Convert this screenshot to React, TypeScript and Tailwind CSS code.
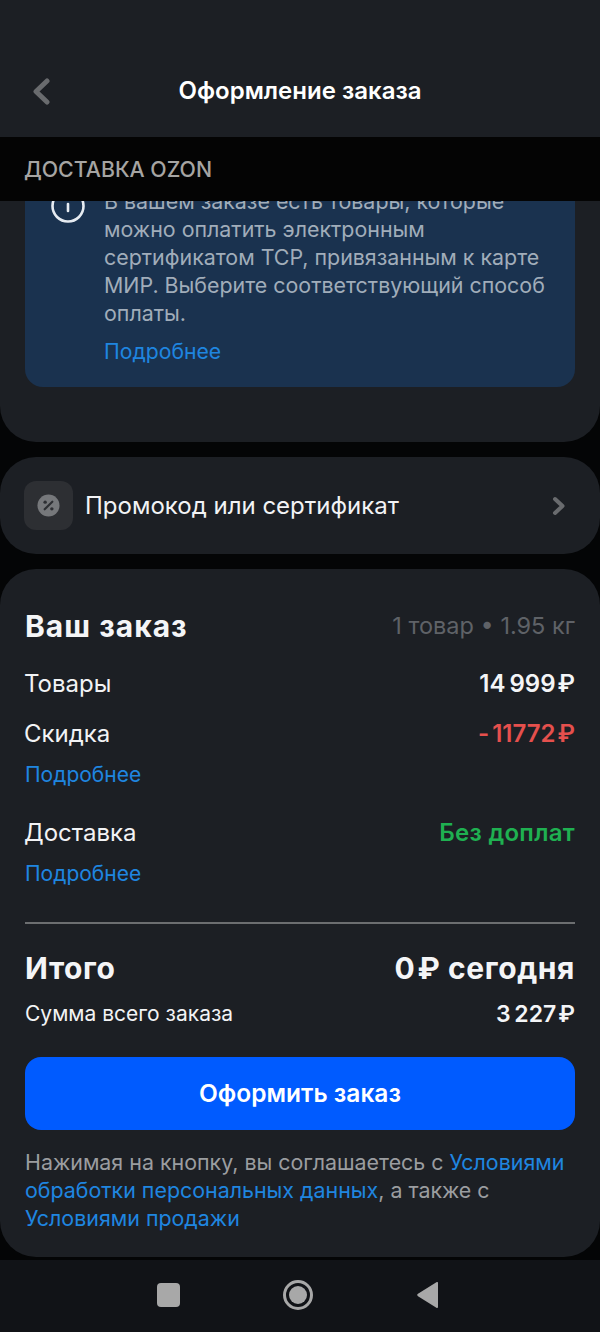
function Rub() {
    return <span className="ml-[2px]">₽</span>;
}

function Row({ label, value, valueClass }: { label: string; value: React.ReactNode; valueClass: string }) {
    return (
        <div className="flex items-center justify-between h-[30px]">
            <span className="text-[24px] text-[#f2f3f5] -ml-[1px]">{label}</span>
            <span className={`text-[24px] font-semibold ${valueClass}`}>{value}</span>
        </div>
    );
}

function More() {
    return <div className="text-[21px] leading-[30px] text-[#1f86e0] mt-[11px]">Подробнее</div>;
}

export default function App() {
    return (
        <div className="w-[600px] h-[1332px] flex flex-col overflow-hidden bg-[#040506] font-['Inter',sans-serif]">
            {/* Header */}
            <header className="h-[137px] shrink-0 bg-[#1c1f24] relative flex items-end justify-center pb-[32px]">
                <svg viewBox="0 0 20 28" className="absolute left-[31px] top-[77px] w-[20px] h-[28px]" fill="none" stroke="#696b6e" strokeWidth="5" strokeLinejoin="round" strokeLinecap="round">
                    <path d="M16 4L5 14.5L16 25" />
                </svg>
                <h1 className="text-[24px] leading-[30px] font-semibold text-white translate-y-[1px]">Оформление заказа</h1>
            </header>

            <div className="h-[64px] shrink-0 bg-[#040404] flex items-center px-[24px] pt-[1px]">
                <span className="text-[21.3px] font-medium text-[#a6a5a3]">ДОСТАВКА OZON</span>
            </div>

            {/* Scrolled content, top card is cut off by the sticky bar */}
            <div className="flex-1 min-h-0 overflow-hidden flex flex-col">
                <section className="h-[241px] shrink-0 bg-[#1c1f24] rounded-b-[36px] px-[25px] overflow-hidden">
                    <div className="h-[186px] bg-[#1a324f] rounded-b-[18px] flex gap-[18px] pl-[25px] pr-[24px] overflow-hidden">
                        <svg viewBox="0 0 36 36" className="w-[36px] h-[36px] shrink-0 mt-[-13px] text-[#e6ebf1]" fill="none" stroke="currentColor">
                            <circle cx="18" cy="18" r="15.5" strokeWidth="2.6" />
                            <path d="M18 16v7" strokeWidth="2.6" strokeLinecap="round" />
                        </svg>
                        <div className="flex-1 mt-[-14px]">
                            <p className="text-[21.4px] leading-[28px] text-[#a1adba]">
                                В вашем заказе есть товары, которые можно оплатить электронным сертификатом ТСР, привязанным к карте МИР. Выберите соответствующий способ оплаты.
                            </p>
                            <div className="text-[21.2px] leading-[30px] text-[#1f86e0] mt-[9px]">Подробнее</div>
                        </div>
                    </div>
                </section>

                <section className="mt-[15px] h-[97px] shrink-0 bg-[#1c1f24] rounded-[36px] flex items-center px-[24px]">
                    <div className="w-[49px] h-[49px] rounded-[12px] bg-[#2d2f33] flex items-center justify-center">
                        <svg viewBox="0 0 24 24" className="w-[23px] h-[23px]">
                            <circle cx="12" cy="12" r="11.5" fill="#76787b" />
                            <path d="M8 16l8-8" stroke="#2d2f33" strokeWidth="2.2" strokeLinecap="round" />
                            <circle cx="8.5" cy="8.5" r="1.8" fill="#2d2f33" />
                            <circle cx="15.5" cy="15.5" r="1.8" fill="#2d2f33" />
                        </svg>
                    </div>
                    <span className="ml-[12px] flex-1 text-[24px] text-[#f2f3f5]">Промокод или сертификат</span>
                    <svg viewBox="0 0 16 20" className="w-[16px] h-[20px] mr-[9px]" fill="none" stroke="#696b6e" strokeWidth="4" strokeLinejoin="round" strokeLinecap="round">
                        <path d="M4 3L11.5 10L4 17" />
                    </svg>
                </section>

                <section className="mt-[15px] h-[688px] shrink-0 bg-[#1c1f24] rounded-[36px] px-[25px] pt-[40px]">
                    <div className="flex items-center justify-between h-[34px]">
                        <h2 className="text-[30px] font-bold text-[#f4f5f7] tracking-[1px]">Ваш заказ</h2>
                        <span className="text-[23.5px] text-[#5f6267]">1 товар • 1.95 кг</span>
                    </div>

                    <div className="mt-[26px]">
                        <Row label="Товары" value={<>14&#8201;999<Rub /></>} valueClass="text-[#f4f5f7]" />
                    </div>
                    <div className="mt-[20px]">
                        <Row label="Скидка" value={<><span className="mr-[3px]">-</span>11772<Rub /></>} valueClass="text-[#e5504d]" />
                        <More />
                    </div>
                    <div className="mt-[28px]">
                        <Row label="Доставка" value="Без доплат" valueClass="text-[#1fb051] tracking-[0.3px]" />
                        <More />
                    </div>

                    <div className="mt-[33px] h-[2px] bg-[#6c6e70]" />

                    <div className="mt-[26px] flex items-center justify-between h-[36px] text-[30px] font-bold text-[#f4f5f7] tracking-[0.6px]">
                        <span>Итого</span>
                        <span>0<Rub /> сегодня</span>
                    </div>
                    <div className="mt-[13px] flex items-center justify-between h-[30px]">
                        <span className="text-[21px] text-[#f2f3f5]">Сумма всего заказа</span>
                        <span className="text-[23px] font-semibold text-[#f4f5f7]">3&#8201;227<Rub /></span>
                    </div>

                    <button className="mt-[28px] w-full h-[73px] rounded-[16px] bg-[#005bff] text-[24.5px] font-semibold text-white">
                        Оформить заказ
                    </button>

                    <p className="mt-[18px] text-[21.4px] leading-[28px] text-[#9b9da0]">
                        Нажимая на кнопку, вы соглашаетесь с <span className="text-[#1f86e0]">Условиями обработки персональных данных</span>, а также с <span className="text-[#1f86e0]">Условиями продажи</span>
                    </p>
                </section>

                {/* Android nav bar */}
                <nav className="mt-[3px] flex-1 bg-[#111317] relative">
                    <span className="absolute left-[157px] top-[23px] w-[23px] h-[24px] rounded-[4px] bg-[#a8a8a8]" />
                    <span className="absolute left-[283px] top-[20px] w-[30px] h-[30px] rounded-full border-[3px] border-[#a8a8a8] flex items-center justify-center">
                        <span className="w-[18px] h-[18px] rounded-full bg-[#a8a8a8]" />
                    </span>
                    <svg viewBox="0 0 21 26" className="absolute left-[417px] top-[22px] w-[21px] h-[26px]">
                        <path d="M21 1v24a1 1 0 0 1-1.6.8L1 14.2a1.5 1.5 0 0 1 0-2.4L19.4.2A1 1 0 0 1 21 1z" fill="#a8a8a8" />
                    </svg>
                </nav>
            </div>
        </div>
    );
}
